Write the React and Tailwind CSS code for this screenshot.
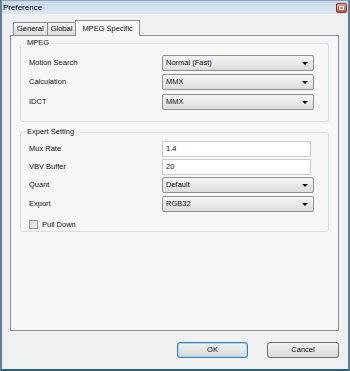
import React from "react";

const Select = ({ value, className = "" }) => (
  <div
    className={`w-[152px] h-[16px] flex items-center justify-between pl-[3px] pr-[5px] border border-[#8e8f8f] rounded-[2px] bg-gradient-to-b from-[#f6f6f6] to-[#dddddd] text-[7.5px] text-[#111] ${className}`}
  >
    <span>{value}</span>
    <svg width="6" height="3" viewBox="0 0 6 3">
      <path d="M0 0h6L3 3z" fill="#000" />
    </svg>
  </div>
);

const TextBox = ({ value, className = "" }) => (
  <div
    className={`w-[149px] h-[16px] flex items-center pl-[3px] border border-[#c8cdd4] bg-white text-[7.5px] text-[#111] ${className}`}
  >
    {value}
  </div>
);

const Row = ({ label, children, className = "" }) => (
  <div className={`flex items-center justify-between pl-[8px] pr-[14px] ${className}`}>
    <span className="text-[7.5px] text-[#111]">{label}</span>
    {children}
  </div>
);

const Group = ({ title, children, className = "" }) => (
  <fieldset
    className={`mx-[9px] border border-[#d5dfe5] rounded-[3px] shadow-[inset_1px_1px_0_#fff] ${className}`}
  >
    <legend className="ml-[4px] px-[2px] text-[7.5px] text-[#111] leading-[12px]">{title}</legend>
    {children}
  </fieldset>
);

const Tab = ({ label, active }) =>
  active ? (
    <div className="h-[16px] -mb-px px-[6px] flex items-center bg-[#f7f7f7] border border-b-0 border-[#898c95] text-[7.5px] text-[#111] relative z-10">
      {label}
    </div>
  ) : (
    <div className="h-[13px] mt-[3px] px-[3px] flex items-center bg-gradient-to-b from-[#f2f2f2] to-[#dedede] border border-b-0 border-[#898c95] text-[7.5px] text-[#111] -mr-px">
      {label}
    </div>
  );

export default function App() {
  return (
    <div
      className="w-[350px] h-[371px] flex flex-col bg-[#f0f0f0] border-l-2 border-r-2 border-b-2 border-l-[#5f7e99] border-r-[#5f7e99] border-b-[#2b6171] overflow-hidden"
      style={{ fontFamily: '"Liberation Sans", Arial, sans-serif' }}
    >
      {/* Title bar */}
      <div className="h-[14px] flex items-center justify-between pl-[1px] pr-[1px] bg-gradient-to-b from-[#c9d8ea] to-[#dce8f5] border-t border-[#8ea4bd]">
        <span className="text-[8px] text-black leading-none">Preference</span>
        <div className="w-[11px] h-[10px] mt-[1px] flex items-center justify-center rounded-[2px] border border-[#8a3a2e] bg-gradient-to-b from-[#e49f8e] to-[#c2543f]">
          <div className="w-[5px] h-[4px] bg-[#9aa3ac] border border-[#eee]" />
        </div>
      </div>

      {/* Body */}
      <div className="flex-1 flex flex-col pl-[8px] pr-[9px] pt-[5px]">
        <div className="flex items-end pl-[3px]">
          <Tab label="General" />
          <Tab label="Global" />
          <Tab label="MPEG Specific" active />
        </div>
        <div className="h-[296px] border border-[#898c95] bg-[#f7f7f7] pt-[1px]">
          <Group title="MPEG" className="pb-[11px]">
            <Row label="Motion Search" className="mt-[6px]">
              <Select value="Normal (Fast)" />
            </Row>
            <Row label="Calculation" className="mt-[3px]">
              <Select value="MMX" />
            </Row>
            <Row label="IDCT" className="mt-[4px]">
              <Select value="MMX" />
            </Row>
          </Group>

          <Group title="Expert Setting" className="mt-[4px] pb-[1px]">
            <Row label="Mux Rate" className="mt-[3px]">
              <TextBox value="1.4" className="mr-[3px]" />
            </Row>
            <Row label="VBV Buffer" className="mt-[2px]">
              <TextBox value="20" className="mr-[3px]" />
            </Row>
            <Row label="Quant" className="mt-[2px]">
              <Select value="Default" />
            </Row>
            <Row label="Export" className="mt-[3px]">
              <Select value="RGB32" />
            </Row>
            <div className="flex items-center gap-[4px] pl-[8px] mt-[7px]">
              <div className="w-[9px] h-[9px] border border-[#8f8f8f] bg-gradient-to-br from-[#d8d8d8] to-[#f4f4f4]" />
              <span className="text-[7.5px] text-[#111]">Pull Down</span>
            </div>
          </Group>
        </div>

        {/* Buttons */}
        <div className="flex justify-end gap-[19px] mt-[11px]">
          <button className="w-[71px] h-[16px] rounded-[3px] border border-[#3c7fb1] bg-gradient-to-b from-[#f2f2f2] to-[#d9d9d9] text-[7.5px] text-[#111] shadow-[inset_0_0_0_1px_#9fd5f5]">
            OK
          </button>
          <button className="w-[72px] h-[16px] rounded-[3px] border border-[#707070] bg-gradient-to-b from-[#f2f2f2] to-[#d9d9d9] text-[7.5px] text-[#111]">
            Cancel
          </button>
        </div>
      </div>
    </div>
  );
}
